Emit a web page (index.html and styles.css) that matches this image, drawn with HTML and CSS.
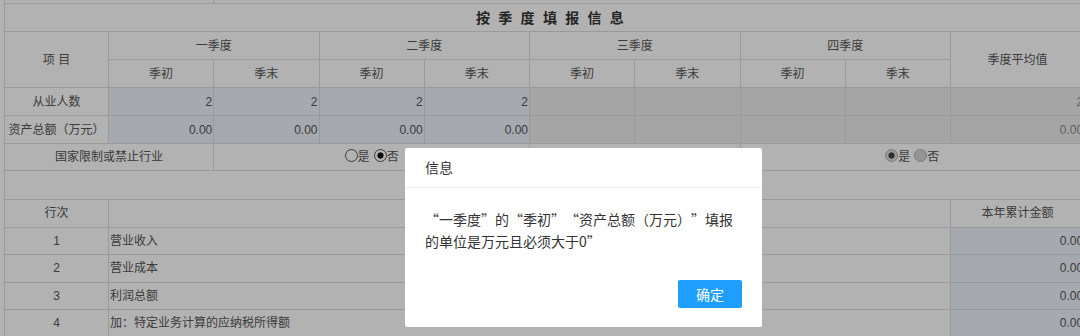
FILE: index.html
```html
<!DOCTYPE html>
<html lang="zh-CN">
<head>
<meta charset="utf-8">
<title>按季度填报信息</title>
<link rel="stylesheet" href="styles.css">
</head>
<body>
<div class="page">
  <div class="prev-row"><div class="prev-cell"></div><div class="prev-rest"></div></div>
  <table class="grid">
    <colgroup>
      <col class="c-first">
      <col class="c-q"><col class="c-q"><col class="c-q"><col class="c-q">
      <col class="c-q"><col class="c-q"><col class="c-q"><col class="c-q">
      <col class="c-last">
    </colgroup>
    <tr>
      <td colspan="10" class="title">按季度填报信息</td>
    </tr>
    <tr>
      <td rowspan="2">项 目</td>
      <td colspan="2">一季度</td>
      <td colspan="2">二季度</td>
      <td colspan="2">三季度</td>
      <td colspan="2">四季度</td>
      <td rowspan="2">季度平均值</td>
    </tr>
    <tr>
      <td>季初</td><td>季末</td>
      <td>季初</td><td>季末</td>
      <td>季初</td><td>季末</td>
      <td>季初</td><td>季末</td>
    </tr>
    <tr>
      <td>从业人数</td>
      <td class="in">2</td><td class="in">2</td>
      <td class="in">2</td><td class="in">2</td>
      <td class="dis"></td><td class="dis"></td>
      <td class="dis"></td><td class="dis"></td>
      <td class="dis num">2</td>
    </tr>
    <tr>
      <td>资产总额（万元）</td>
      <td class="in">0.00</td><td class="in">0.00</td>
      <td class="in">0.00</td><td class="in">0.00</td>
      <td class="dis"></td><td class="dis"></td>
      <td class="dis"></td><td class="dis"></td>
      <td class="dis num">0.00</td>
    </tr>
    <tr class="r-limit">
      <td colspan="2">国家限制或禁止行业</td>
      <td colspan="3"><span class="radios"><span class="rb"></span><span>是</span><span class="rb on"></span><span>否</span></span></td>
      <td colspan="2"></td>
      <td colspan="3"><span class="radios"><span class="rb dim on"></span><span>是</span><span class="rb dim"></span><span>否</span></span></td>
    </tr>
    <tr class="blank">
      <td colspan="10"></td>
    </tr>
    <tr class="r-low">
      <td>行次</td>
      <td colspan="8"></td>
      <td>本年累计金额</td>
    </tr>
    <tr class="r-low">
      <td>1</td>
      <td colspan="8" class="item">营业收入</td>
      <td class="in">0.00</td>
    </tr>
    <tr class="r-low">
      <td>2</td>
      <td colspan="8" class="item">营业成本</td>
      <td class="in">0.00</td>
    </tr>
    <tr class="r-low">
      <td>3</td>
      <td colspan="8" class="item">利润总额</td>
      <td class="in">0.00</td>
    </tr>
    <tr class="r-low">
      <td>4</td>
      <td colspan="8" class="item">加：特定业务计算的应纳税所得额</td>
      <td class="in">0.00</td>
    </tr>
  </table>
</div>

<div class="mask"></div>
<div class="layer">
  <div class="layer-title">信息</div>
  <div class="layer-content">“一季度”的“季初”“资产总额（万元）”填报的单位是万元且必须大于0”</div>
  <div class="layer-btns"><span class="btn">确定</span></div>
</div>
</body>
</html>
```

FILE: styles.css
```css
* { box-sizing: border-box; }

html, body {
  margin: 0;
  background: #fff;
}

body {
  width: 1080px;
  height: 336px;
  overflow: hidden;
  font-family: "Liberation Sans", "Noto Sans CJK SC", sans-serif;
  font-size: 12px;
  color: #555;
}

.page {
  padding-left: 4px;
}

.prev-row {
  display: flex;
  height: 3px;
  border-left: 1px solid #ddd;
}

.prev-cell {
  width: 209px;
  border-right: 1px solid #ddd;
}

.grid {
  border-collapse: collapse;
  table-layout: fixed;
  width: 1080px;
}

.c-first { width: 104px; }
.c-q { width: 105.25px; }
.c-last { width: 134px; }

.grid tr {
  height: 28px;
}

.grid tr.r-limit { height: 27px; }
.grid tr.blank { height: 29px; }
.grid tr.r-low { height: 27.5px; }

.grid td {
  border: 1px solid #ddd;
  padding: 0 2px;
  text-align: center;
  vertical-align: middle;
  line-height: 16px;
  white-space: nowrap;
  overflow: hidden;
}

.grid .title {
  font-size: 14px;
  font-weight: bold;
  color: #333;
  letter-spacing: 8.3px;
  padding-left: 21px;
}

.grid td.in {
  background: #eef3fc;
  text-align: right;
  padding: 0 1px 0 0;
  color: #555;
}

.grid td.dis {
  background: #ececec;
}

.grid td.num {
  text-align: right;
  padding: 0 1px 0 0;
  color: #8a8a8a;
}

.grid td.item {
  text-align: left;
  padding-left: 1px;
}

.radios {
  display: inline-flex;
  align-items: center;
  color: #555;
}

.rb {
  width: 13px;
  height: 13px;
  margin-bottom: 3px;
  border: 1px solid #555;
  border-radius: 50%;
  background: #fff;
}

.rb + span + .rb {
  margin-left: 4px;
}

.rb.on {
  background: radial-gradient(circle, #111 0 2.8px, #fff 3.4px);
}

.rb.dim {
  border-color: #b0b0b0;
  background: #d6d6d6;
}

.rb.dim.on {
  background: radial-gradient(circle, #444 0 2.8px, #dcdcdc 3.4px);
}

.mask {
  position: fixed;
  inset: 0;
  background: rgba(0, 0, 0, 0.3);
}

.layer {
  position: fixed;
  left: 405px;
  top: 148px;
  width: 357px;
  background: #fff;
  border-radius: 2px;
  font-family: "Noto Sans CJK SC", "Liberation Sans", sans-serif;
  color: #333;
}

.layer-title {
  height: 40px;
  line-height: 39px;
  padding-left: 20px;
  font-size: 14px;
  border-bottom: 1px solid #eee;
}

.layer-content {
  padding: 20px;
  font-size: 14px;
  line-height: 22px;
  text-spacing-trim: space-all;
}

.layer-btns {
  display: flex;
  justify-content: flex-end;
  padding: 8px 20px 19px;
}

.btn {
  display: block;
  width: 64px;
  height: 28px;
  line-height: 28px;
  text-align: center;
  font-size: 14px;
  color: #fff;
  background: #1e9fff;
  border-radius: 2px;
}
```
